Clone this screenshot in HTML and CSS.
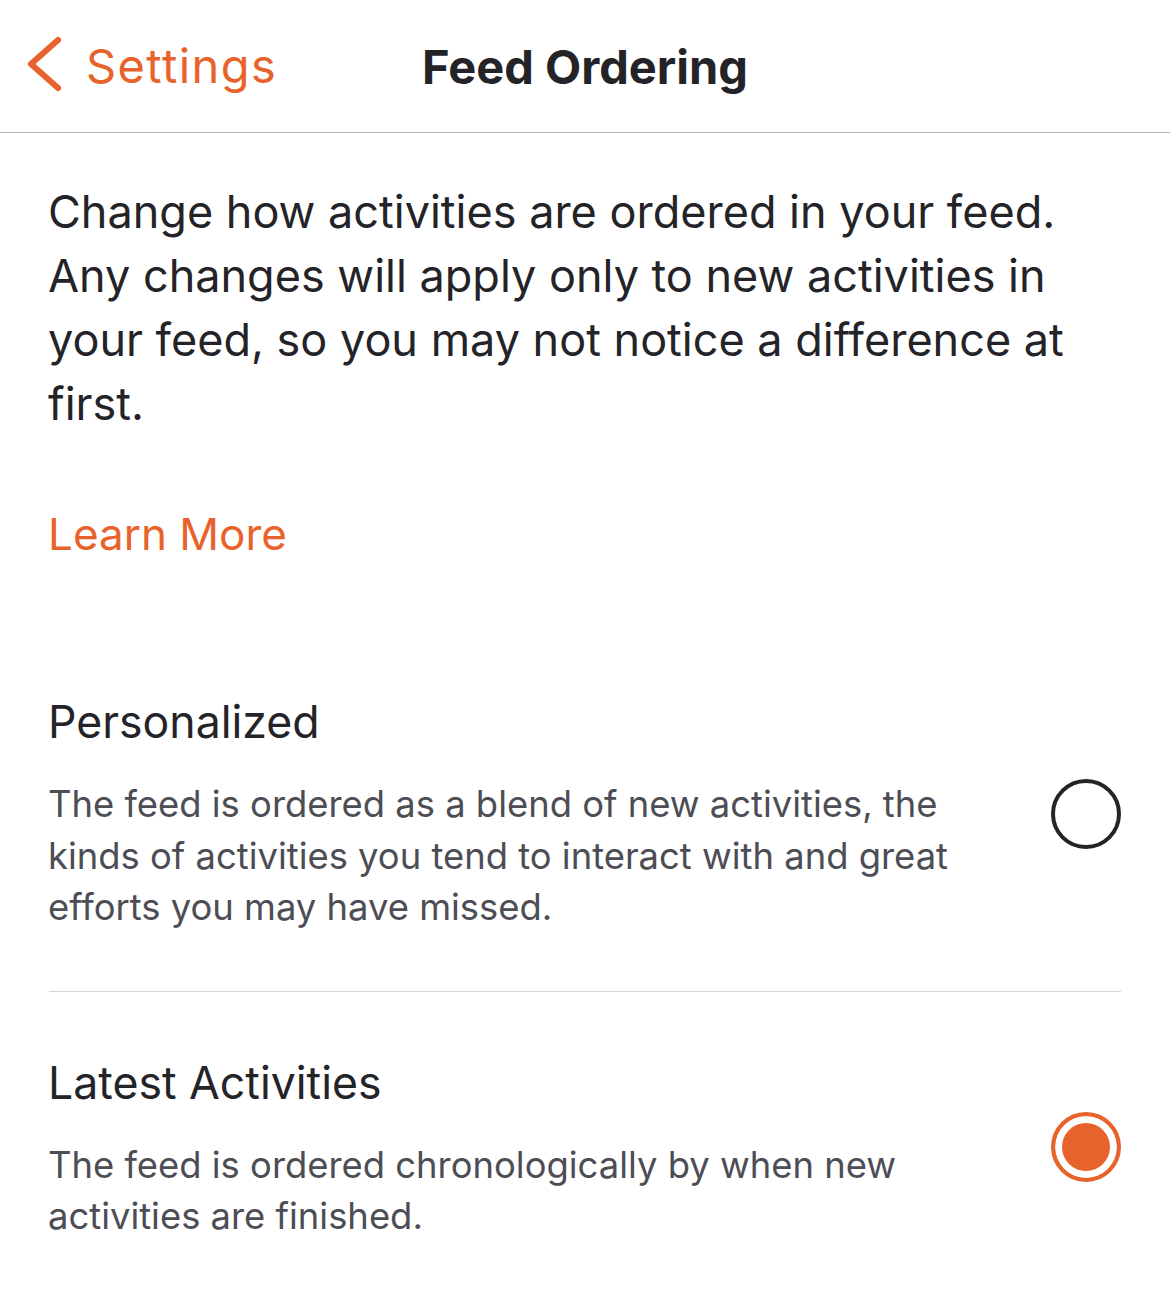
FILE: index.html
```html
<!DOCTYPE html>
<html lang="en">
<head>
<meta charset="utf-8">
<title>Feed Ordering</title>
<link rel="stylesheet" href="styles.css">
</head>
<body>
<header class="navbar">
  <a class="back" href="#">
    <svg class="chevron" width="42" height="60" viewBox="0 0 42 60" aria-hidden="true">
      <path d="M34 5 L7 29 L34 53" fill="none" stroke="#e8632b" stroke-width="6" stroke-linecap="round" stroke-linejoin="round"/>
    </svg>
    <span class="back-label">Settings</span>
  </a>
  <h1 class="title">Feed Ordering</h1>
</header>
<main class="content">
  <p class="intro">Change how activities are ordered in your feed.<br>Any changes will apply only to new activities in<br>your feed, so you may not notice a difference at<br>first.</p>
  <a class="learn-more" href="#">Learn More</a>
  <ul class="options">
    <li class="option">
      <div class="option-text">
        <div class="option-title">Personalized</div>
        <div class="option-desc">The feed is ordered as a blend of new activities, the<br>kinds of activities you tend to interact with and great<br>efforts you may have missed.</div>
      </div>
      <span class="radio"></span>
    </li>
    <li class="option">
      <div class="option-text">
        <div class="option-title">Latest Activities</div>
        <div class="option-desc">The feed is ordered chronologically by when new<br>activities are finished.</div>
      </div>
      <span class="radio radio-on"></span>
    </li>
  </ul>
</main>
</body>
</html>
```
FILE: styles.css
```css
* { box-sizing: border-box; }
html, body { margin: 0; padding: 0; background: #fff; }
body {
  font-family: Inter, "Noto Sans", "Liberation Sans", sans-serif;
  color: #242428;
  width: 1170px;
}
.navbar {
  position: relative;
  height: 133px;
  border-bottom: 1px solid #b5b5b8;
  display: flex;
  align-items: center;
  padding-left: 24px;
}
.back {
  display: flex;
  align-items: center;
  text-decoration: none;
  color: #e8632b;
  gap: 20px;
  margin-top: -2px;
}
.chevron { display: block; }
.back-label {
  font-size: 47px;
  letter-spacing: 1.4px;
  font-weight: 400;
}
.title {
  position: absolute;
  left: 0;
  right: 0;
  top: 0;
  height: 132px;
  margin: 0;
  display: flex;
  align-items: center;
  justify-content: center;
  font-size: 47px;
  font-weight: 700;
  color: #242428;
  pointer-events: none;
}
.content {
  padding: 47px 49px 0 49px;
}
.intro {
  margin: 0 0 0 -1px;
  font-size: 45px;
  line-height: 64px;
  white-space: nowrap;
}
.learn-more {
  display: block;
  margin: 66px 0 0 -1px;
  font-size: 44px;
  line-height: 64px;
  color: #e8632b;
  text-decoration: none;
}
.options {
  list-style: none;
  margin: 65px 0 0 0;
  padding: 0;
}
.option {
  display: flex;
  align-items: center;
  justify-content: space-between;
  padding: 65px 0 57px 0;
}
.option + .option {
  border-top: 1px solid #d6d6d9;
}
.option-text { margin-left: -1px; }
.option-title {
  font-size: 44.6px;
  line-height: 52px;
  color: #242428;
}
.option-desc {
  margin-top: 31px;
  font-size: 36.4px;
  line-height: 51.5px;
  color: #4d4d55;
  white-space: nowrap;
}
.radio {
  flex: none;
  width: 70px;
  height: 70px;
  border-radius: 50%;
  border: 4px solid #242428;
  margin-top: -2px;
}
.radio-on {
  border-color: #e8632b;
  background: #e8632b;
  box-shadow: inset 0 0 0 7px #fff;
  margin-top: -6px;
}
```
